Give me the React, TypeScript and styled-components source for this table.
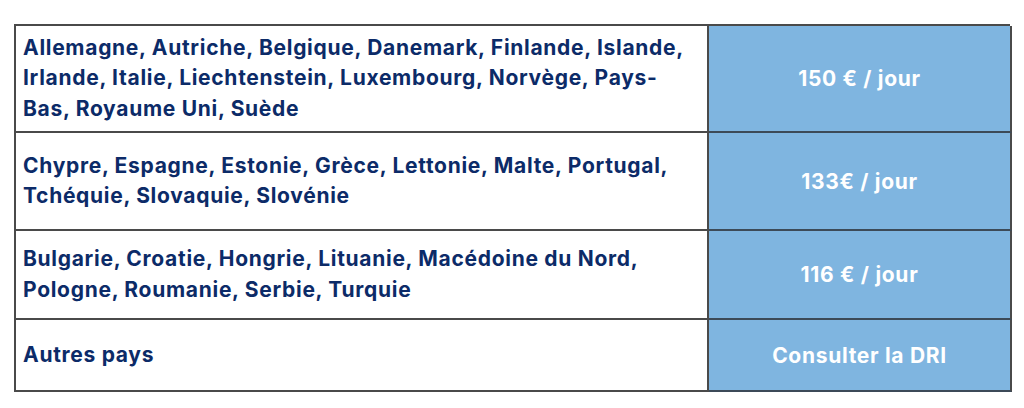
import styled, { createGlobalStyle } from 'styled-components'

interface RateRow {
  countries: string
  rate: string
  height: number
}

const rows: RateRow[] = [
  {
    countries:
      'Allemagne, Autriche, Belgique, Danemark, Finlande, Islande, Irlande, Italie, Liechtenstein, Luxembourg, Norvège, Pays-Bas, Royaume Uni, Suède',
    rate: '150 € / jour',
    height: 107,
  },
  {
    countries:
      'Chypre, Espagne, Estonie, Grèce, Lettonie, Malte, Portugal, Tchéquie, Slovaquie, Slovénie',
    rate: '133€ / jour',
    height: 98,
  },
  {
    countries:
      'Bulgarie, Croatie, Hongrie, Lituanie, Macédoine du Nord, Pologne, Roumanie, Serbie, Turquie',
    rate: '116 € / jour',
    height: 89,
  },
  {
    countries: 'Autres pays',
    rate: 'Consulter la DRI',
    height: 72,
  },
]

const GlobalStyle = createGlobalStyle`
  html, body {
    margin: 0;
    padding: 0;
    background: #ffffff;
  }
  body {
    font-family: Inter, 'Liberation Sans', sans-serif;
  }
`

const Page = styled.div`
  padding: 24px 0 0 14px;
`

const Table = styled.div`
  display: grid;
  grid-template-columns: 693px 303px;
  width: 996px;
  border-top: 2px solid #4a4a4a;
  border-left: 2px solid #4a4a4a;
  box-sizing: border-box;
`

const CountryCell = styled.div<{ $height: number }>`
  height: ${({ $height }) => $height}px;
  box-sizing: border-box;
  display: flex;
  align-items: center;
  padding: 0 16px 0 7px;
  border-right: 2px solid #4a4a4a;
  border-bottom: 2px solid #4a4a4a;
  color: #0c2b68;
  font-size: 21px;
  font-weight: 700;
  letter-spacing: 0.7px;
  line-height: 30.5px;
`

const RateCell = styled.div<{ $height: number }>`
  height: ${({ $height }) => $height}px;
  box-sizing: border-box;
  display: flex;
  align-items: center;
  justify-content: center;
  background-color: #7fb5e0;
  border-right: 2px solid #4a4a4a;
  border-bottom: 2px solid #3c4a58;
  color: #ffffff;
  font-size: 21px;
  font-weight: 700;
  letter-spacing: 0.7px;
`

export default function App() {
  return (
    <>
      <GlobalStyle />
      <Page>
        <Table>
          {rows.map((row) => (
            <>
              <CountryCell key={`c-${row.rate}`} $height={row.height}>
                {row.countries}
              </CountryCell>
              <RateCell key={`r-${row.rate}`} $height={row.height}>
                {row.rate}
              </RateCell>
            </>
          ))}
        </Table>
      </Page>
    </>
  )
}
